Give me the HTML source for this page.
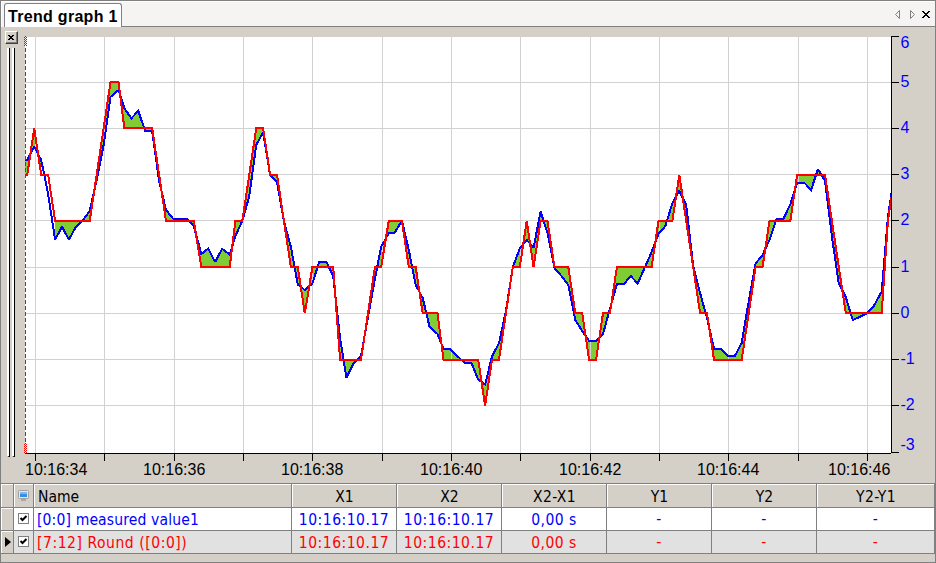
<!DOCTYPE html>
<html lang="en">
<head>
<meta charset="utf-8">
<title>Trend graph 1</title>
<style>
html,body{margin:0;padding:0;}
body{width:936px;height:563px;overflow:hidden;background:#d4d0c8;position:relative;font-family:"Liberation Sans",sans-serif;font-size:16px;color:#000;}
div,span,i{position:absolute;box-sizing:border-box;}
.edge{background:#808080;}
.tabbar{left:1px;top:1px;width:934px;height:26px;background:#f5f4f2;}
.tabline{left:122px;top:26px;width:813px;height:1px;background:#808080;}
.tab{left:4px;top:3px;width:118px;height:24px;background:#fff;border:1px solid #808080;border-bottom:none;border-radius:3px 3px 0 0;}
.tabtxt{left:8px;top:8px;line-height:18px;white-space:nowrap;font-weight:bold;letter-spacing:0.3px;}
.nav{left:890px;top:6px;}
.xbtn{left:5px;top:31px;width:13px;height:13px;border:1px solid;border-color:#fff #404040 #404040 #fff;box-shadow:inset -1px -1px 0 #808080;}
.grip{top:48px;height:409px;width:3px;border-left:2px solid #fff;border-right:1px solid #000;border-bottom:1px solid #000;}
.plot{position:absolute;left:0;top:0;}
.yl{left:900.5px;color:#0000ff;line-height:18px;height:18px;white-space:nowrap;}
.tl{top:461px;line-height:18px;height:18px;white-space:nowrap;}
.tbl{left:0;top:483px;width:936px;height:80px;font-family:"DejaVu Sans Condensed","Liberation Sans",sans-serif;font-size:15.5px;}
.tbl .top{left:1px;top:0;width:934px;height:1px;background:#808080;}
.hc{top:1px;height:23px;background:#d4d0c8;border-top:1px solid #fff;border-left:1px solid #fff;text-align:center;line-height:21px;padding-top:2px;white-space:nowrap;}
.hc.hl{text-align:left;padding-left:3px;}
.hline{left:1px;width:934px;height:1px;background:#808080;}
.rh{left:1px;width:12px;height:22px;background:#d4d0c8;border-top:1px solid #fff;border-left:1px solid #fff;}
.rh svg{position:absolute;left:3px;top:5px;}
.dc{height:22px;text-align:center;line-height:22px;padding-top:1px;white-space:nowrap;letter-spacing:0.5px;}
.dc.l{text-align:left;padding-left:3px;}
.r1{background:#fff;color:#0000ff;}
.r1.l{letter-spacing:0.15px;}
.r2.l{letter-spacing:0.55px;}
.r2{background:#e1e1e1;color:#ff0000;}
.vs{top:1px;width:1px;height:70px;background:#808080;}
.cb{left:4px;top:5px;width:11px;height:11px;background:#fff;border:1px solid #808080;}
.cb svg{position:absolute;left:0;top:0;}
.mon{left:18px;top:7px;}
.da{position:relative;top:-1px;}
.hc.ws{letter-spacing:0.4px;}
</style>
</head>
<body>
<div class="edge" style="left:0;top:0;width:936px;height:1px"></div>
<div class="edge" style="left:0;top:0;width:1px;height:563px"></div>
<div class="edge" style="left:935px;top:0;width:1px;height:563px"></div>
<div class="edge" style="left:0;top:562px;width:936px;height:1px"></div>
<div class="tabbar"></div>
<div style="left:1px;top:1px;width:934px;height:1px;background:#fff"></div>
<div style="left:1px;top:1px;width:1px;height:26px;background:#fff"></div>
<div class="tabline"></div>
<div class="tab"></div>
<span class="tabtxt">Trend graph 1</span>
<svg class="nav" style="position:absolute" width="44" height="16" viewBox="0 0 44 16">
<path d="M9.5 4.5 L9.5 12.5 L5.5 8.5 Z" fill="none" stroke="#808080" stroke-width="1"/>
<path d="M20.5 4.5 L20.5 12.5 L24.5 8.5 Z" fill="none" stroke="#808080" stroke-width="1"/>
<g fill="#000" shape-rendering="crispEdges"><rect x="32" y="5" width="2" height="1"/><rect x="38" y="5" width="2" height="1"/><rect x="33" y="6" width="2" height="1"/><rect x="37" y="6" width="2" height="1"/><rect x="34" y="7" width="4" height="1"/><rect x="35" y="8" width="2" height="1"/><rect x="34" y="9" width="4" height="1"/><rect x="33" y="10" width="2" height="1"/><rect x="37" y="10" width="2" height="1"/><rect x="32" y="11" width="2" height="1"/><rect x="38" y="11" width="2" height="1"/></g>
</svg>
<div class="xbtn"><svg style="position:absolute;left:2px;top:3px" width="6" height="5" viewBox="0 0 6 5" shape-rendering="crispEdges"><g fill="#000"><rect x="0" y="0" width="2" height="1"/><rect x="4" y="0" width="2" height="1"/><rect x="1" y="1" width="4" height="1"/><rect x="2" y="2" width="2" height="1"/><rect x="1" y="3" width="4" height="1"/><rect x="0" y="4" width="2" height="1"/><rect x="4" y="4" width="2" height="1"/></g></svg></div>
<div class="grip" style="left:7px"></div>
<div class="grip" style="left:12px"></div>
<svg class="plot" width="936" height="563" viewBox="0 0 936 563" shape-rendering="crispEdges">
<defs><clipPath id="cp"><rect x="25" y="37" width="866" height="416"/></clipPath></defs>
<rect x="25" y="37" width="866" height="416" fill="#fff"/>
<g clip-path="url(#cp)" fill="#80cc33" stroke="none"><polygon points="20.4,160.0 27.3,160.0 34.2,146.7 41.2,160.0 41.2,174.7 34.2,128.4 27.3,174.7 20.4,174.7"/><polygon points="55.1,239.7 62.0,226.7 68.9,239.7 75.9,226.7 82.8,220.5 89.7,211.0 96.7,180.0 103.6,145.0 110.5,97.0 118.5,90.0 124.4,108.3 131.4,118.3 138.3,110.8 145.2,131.3 152.2,131.3 159.1,181.0 166.0,210.0 173.0,218.5 179.9,219.0 186.8,219.0 193.8,226.0 201.3,254.0 208.2,248.7 215.2,262.0 222.1,248.7 229.7,254.7 235.4,236.0 242.3,221.0 249.3,196.0 256.2,145.0 263.1,132.5 270.1,175.0 277.0,182.0 283.9,221.0 290.9,247.0 297.8,284.5 304.8,290.0 312.4,283.5 319.3,261.7 326.3,261.7 333.2,276.0 340.1,338.0 346.4,377.5 353.3,364.0 361.0,356.0 368.0,317.0 374.9,279.0 381.1,247.0 388.8,233.0 394.9,232.5 401.9,220.5 408.8,250.0 415.7,285.0 422.7,298.0 429.6,327.0 437.5,334.0 443.5,349.0 450.4,349.0 457.3,356.0 464.3,362.5 471.2,362.5 478.2,379.5 485.1,384.5 492.0,356.5 499.0,343.0 505.9,311.0 512.8,267.0 519.8,248.5 526.7,240.0 533.6,247.5 540.6,211.7 547.5,233.0 554.5,268.0 561.4,276.0 568.3,285.0 575.3,320.0 582.2,331.0 589.1,341.0 596.1,341.0 603.0,334.0 609.9,309.0 616.9,284.2 623.8,284.2 630.7,276.0 637.7,283.5 644.6,268.0 651.6,252.0 658.5,234.0 665.4,226.0 672.4,203.0 679.3,190.8 686.2,205.0 693.2,266.0 700.1,293.0 707.0,318.0 714.0,348.7 720.9,348.7 727.9,356.0 734.8,356.0 741.7,343.0 748.7,301.5 755.6,263.5 762.5,255.0 769.5,240.0 776.4,219.0 783.3,219.0 790.3,204.5 797.2,182.5 804.1,182.5 811.1,190.0 818.0,169.0 825.0,181.0 831.9,236.5 838.8,283.5 845.8,297.0 852.7,320.0 859.6,317.0 866.6,313.5 873.5,306.5 881.7,291.5 887.9,217.0 894.8,172.0 894.8,174.7 887.9,220.9 881.7,313.3 873.5,313.3 866.6,313.3 859.6,313.3 852.7,313.3 845.8,313.3 838.8,267.1 831.9,220.9 825.0,174.7 818.0,174.7 811.1,174.7 804.1,174.7 797.2,174.7 790.3,220.9 783.3,220.9 776.4,220.9 769.5,220.9 762.5,267.1 755.6,267.1 748.7,313.3 741.7,359.6 734.8,359.6 727.9,359.6 720.9,359.6 714.0,359.6 707.0,313.3 700.1,313.3 693.2,267.1 686.2,220.9 679.3,174.7 672.4,220.9 665.4,220.9 658.5,220.9 651.6,267.1 644.6,267.1 637.7,267.1 630.7,267.1 623.8,267.1 616.9,267.1 609.9,313.3 603.0,313.3 596.1,359.6 589.1,359.6 582.2,313.3 575.3,313.3 568.3,267.1 561.4,267.1 554.5,267.1 547.5,220.9 540.6,220.9 533.6,267.1 526.7,220.9 519.8,267.1 512.8,267.1 505.9,313.3 499.0,359.6 492.0,359.6 485.1,405.8 478.2,359.6 471.2,359.6 464.3,359.6 457.3,359.6 450.4,359.6 443.5,359.6 437.5,313.3 429.6,313.3 422.7,313.3 415.7,267.1 408.8,267.1 401.9,220.9 394.9,220.9 388.8,220.9 381.1,267.1 374.9,267.1 368.0,313.3 361.0,359.6 353.3,359.6 346.4,359.6 340.1,359.6 333.2,267.1 326.3,267.1 319.3,267.1 312.4,267.1 304.8,313.3 297.8,267.1 290.9,267.1 283.9,220.9 277.0,174.7 270.1,174.7 263.1,128.4 256.2,128.4 249.3,174.7 242.3,220.9 235.4,220.9 229.7,267.1 222.1,267.1 215.2,267.1 208.2,267.1 201.3,267.1 193.8,220.9 186.8,220.9 179.9,220.9 173.0,220.9 166.0,220.9 159.1,174.7 152.2,128.4 145.2,128.4 138.3,128.4 131.4,128.4 124.4,128.4 118.5,82.2 110.5,82.2 103.6,128.4 96.7,174.7 89.7,220.9 82.8,220.9 75.9,220.9 68.9,220.9 62.0,220.9 55.1,220.9"/></g>
<g fill="#d2d2d2"><rect x="35" y="37" width="1" height="416"/><rect x="104" y="37" width="1" height="416"/><rect x="174" y="37" width="1" height="416"/><rect x="243" y="37" width="1" height="416"/><rect x="312" y="37" width="1" height="416"/><rect x="382" y="37" width="1" height="416"/><rect x="451" y="37" width="1" height="416"/><rect x="520" y="37" width="1" height="416"/><rect x="590" y="37" width="1" height="416"/><rect x="659" y="37" width="1" height="416"/><rect x="728" y="37" width="1" height="416"/><rect x="798" y="37" width="1" height="416"/><rect x="867" y="37" width="1" height="416"/><rect x="25" y="82" width="866" height="1"/><rect x="25" y="128" width="866" height="1"/><rect x="25" y="174" width="866" height="1"/><rect x="25" y="220" width="866" height="1"/><rect x="25" y="267" width="866" height="1"/><rect x="25" y="313" width="866" height="1"/><rect x="25" y="359" width="866" height="1"/><rect x="25" y="405" width="866" height="1"/></g>
<g clip-path="url(#cp)">
<polyline points="20.4,160.0 27.3,160.0 34.2,146.7 41.2,160.0 48.1,194.0 55.1,239.7 62.0,226.7 68.9,239.7 75.9,226.7 82.8,220.5 89.7,211.0 96.7,180.0 103.6,145.0 110.5,97.0 118.5,90.0 124.4,108.3 131.4,118.3 138.3,110.8 145.2,131.3 152.2,131.3 159.1,181.0 166.0,210.0 173.0,218.5 179.9,219.0 186.8,219.0 193.8,226.0 201.3,254.0 208.2,248.7 215.2,262.0 222.1,248.7 229.7,254.7 235.4,236.0 242.3,221.0 249.3,196.0 256.2,145.0 263.1,132.5 270.1,175.0 277.0,182.0 283.9,221.0 290.9,247.0 297.8,284.5 304.8,290.0 312.4,283.5 319.3,261.7 326.3,261.7 333.2,276.0 340.1,338.0 346.4,377.5 353.3,364.0 361.0,356.0 368.0,317.0 374.9,279.0 381.1,247.0 388.8,233.0 394.9,232.5 401.9,220.5 408.8,250.0 415.7,285.0 422.7,298.0 429.6,327.0 437.5,334.0 443.5,349.0 450.4,349.0 457.3,356.0 464.3,362.5 471.2,362.5 478.2,379.5 485.1,384.5 492.0,356.5 499.0,343.0 505.9,311.0 512.8,267.0 519.8,248.5 526.7,240.0 533.6,247.5 540.6,211.7 547.5,233.0 554.5,268.0 561.4,276.0 568.3,285.0 575.3,320.0 582.2,331.0 589.1,341.0 596.1,341.0 603.0,334.0 609.9,309.0 616.9,284.2 623.8,284.2 630.7,276.0 637.7,283.5 644.6,268.0 651.6,252.0 658.5,234.0 665.4,226.0 672.4,203.0 679.3,190.8 686.2,205.0 693.2,266.0 700.1,293.0 707.0,318.0 714.0,348.7 720.9,348.7 727.9,356.0 734.8,356.0 741.7,343.0 748.7,301.5 755.6,263.5 762.5,255.0 769.5,240.0 776.4,219.0 783.3,219.0 790.3,204.5 797.2,182.5 804.1,182.5 811.1,190.0 818.0,169.0 825.0,181.0 831.9,236.5 838.8,283.5 845.8,297.0 852.7,320.0 859.6,317.0 866.6,313.5 873.5,306.5 881.7,291.5 887.9,217.0 894.8,172.0" fill="none" stroke="#0000ff" stroke-width="2" stroke-linejoin="miter" stroke-miterlimit="2"/>
<polyline points="20.4,174.7 27.3,174.7 34.2,128.4 41.2,174.7 48.1,174.7 55.1,220.9 62.0,220.9 68.9,220.9 75.9,220.9 82.8,220.9 89.7,220.9 96.7,174.7 103.6,128.4 110.5,82.2 118.5,82.2 124.4,128.4 131.4,128.4 138.3,128.4 145.2,128.4 152.2,128.4 159.1,174.7 166.0,220.9 173.0,220.9 179.9,220.9 186.8,220.9 193.8,220.9 201.3,267.1 208.2,267.1 215.2,267.1 222.1,267.1 229.7,267.1 235.4,220.9 242.3,220.9 249.3,174.7 256.2,128.4 263.1,128.4 270.1,174.7 277.0,174.7 283.9,220.9 290.9,267.1 297.8,267.1 304.8,313.3 312.4,267.1 319.3,267.1 326.3,267.1 333.2,267.1 340.1,359.6 346.4,359.6 353.3,359.6 361.0,359.6 368.0,313.3 374.9,267.1 381.1,267.1 388.8,220.9 394.9,220.9 401.9,220.9 408.8,267.1 415.7,267.1 422.7,313.3 429.6,313.3 437.5,313.3 443.5,359.6 450.4,359.6 457.3,359.6 464.3,359.6 471.2,359.6 478.2,359.6 485.1,405.8 492.0,359.6 499.0,359.6 505.9,313.3 512.8,267.1 519.8,267.1 526.7,220.9 533.6,267.1 540.6,220.9 547.5,220.9 554.5,267.1 561.4,267.1 568.3,267.1 575.3,313.3 582.2,313.3 589.1,359.6 596.1,359.6 603.0,313.3 609.9,313.3 616.9,267.1 623.8,267.1 630.7,267.1 637.7,267.1 644.6,267.1 651.6,267.1 658.5,220.9 665.4,220.9 672.4,220.9 679.3,174.7 686.2,220.9 693.2,267.1 700.1,313.3 707.0,313.3 714.0,359.6 720.9,359.6 727.9,359.6 734.8,359.6 741.7,359.6 748.7,313.3 755.6,267.1 762.5,267.1 769.5,220.9 776.4,220.9 783.3,220.9 790.3,220.9 797.2,174.7 804.1,174.7 811.1,174.7 818.0,174.7 825.0,174.7 831.9,220.9 838.8,267.1 845.8,313.3 852.7,313.3 859.6,313.3 866.6,313.3 873.5,313.3 881.7,313.3 887.9,220.9 894.8,174.7" fill="none" stroke="#ff0000" stroke-width="2" stroke-linejoin="miter" stroke-miterlimit="2"/>
</g>
<g fill="#000"><rect x="25" y="453" width="866" height="1"/><rect x="891" y="36" width="1" height="417"/><rect x="891" y="36" width="8" height="1"/><rect x="891" y="82" width="8" height="1"/><rect x="891" y="128" width="8" height="1"/><rect x="891" y="174" width="8" height="1"/><rect x="891" y="220" width="8" height="1"/><rect x="891" y="267" width="8" height="1"/><rect x="891" y="313" width="8" height="1"/><rect x="891" y="359" width="8" height="1"/><rect x="891" y="405" width="8" height="1"/><rect x="891" y="452" width="8" height="1"/><rect x="35" y="453" width="1" height="8"/><rect x="104" y="453" width="1" height="8"/><rect x="174" y="453" width="1" height="8"/><rect x="243" y="453" width="1" height="8"/><rect x="312" y="453" width="1" height="8"/><rect x="382" y="453" width="1" height="8"/><rect x="451" y="453" width="1" height="8"/><rect x="520" y="453" width="1" height="8"/><rect x="590" y="453" width="1" height="8"/><rect x="659" y="453" width="1" height="8"/><rect x="728" y="453" width="1" height="8"/><rect x="798" y="453" width="1" height="8"/><rect x="867" y="453" width="1" height="8"/></g>
<g fill="#ff0000"><rect x="25" y="36" width="1" height="1"/><rect x="24" y="37" width="1" height="1"/><rect x="26" y="37" width="1" height="1"/><rect x="25" y="38" width="1" height="1"/><rect x="24" y="39" width="1" height="1"/><rect x="26" y="39" width="1" height="1"/><rect x="25" y="40" width="1" height="1"/><rect x="24" y="41" width="1" height="1"/><rect x="26" y="41" width="1" height="1"/><rect x="25" y="42" width="1" height="1"/><rect x="24" y="43" width="1" height="1"/><rect x="26" y="43" width="1" height="1"/><rect x="25" y="44" width="1" height="1"/><rect x="24" y="45" width="1" height="1"/><rect x="26" y="45" width="1" height="1"/><rect x="25" y="443" width="1" height="1"/><rect x="24" y="444" width="1" height="1"/><rect x="26" y="444" width="1" height="1"/><rect x="25" y="445" width="1" height="1"/><rect x="24" y="446" width="1" height="1"/><rect x="26" y="446" width="1" height="1"/><rect x="25" y="447" width="1" height="1"/><rect x="24" y="448" width="1" height="1"/><rect x="26" y="448" width="1" height="1"/><rect x="25" y="449" width="1" height="1"/><rect x="24" y="450" width="1" height="1"/><rect x="26" y="450" width="1" height="1"/><rect x="25" y="451" width="1" height="1"/><rect x="24" y="452" width="1" height="1"/><rect x="26" y="452" width="1" height="1"/><rect x="25" y="48" width="1" height="4"/><rect x="25" y="54" width="1" height="4"/><rect x="25" y="60" width="1" height="4"/><rect x="25" y="66" width="1" height="4"/><rect x="25" y="72" width="1" height="4"/><rect x="25" y="78" width="1" height="4"/><rect x="25" y="84" width="1" height="4"/><rect x="25" y="90" width="1" height="4"/><rect x="25" y="96" width="1" height="4"/><rect x="25" y="102" width="1" height="4"/><rect x="25" y="108" width="1" height="4"/><rect x="25" y="114" width="1" height="4"/><rect x="25" y="120" width="1" height="4"/><rect x="25" y="126" width="1" height="4"/><rect x="25" y="132" width="1" height="4"/><rect x="25" y="138" width="1" height="4"/><rect x="25" y="144" width="1" height="4"/><rect x="25" y="150" width="1" height="4"/><rect x="25" y="156" width="1" height="4"/><rect x="25" y="162" width="1" height="4"/><rect x="25" y="168" width="1" height="4"/><rect x="25" y="174" width="1" height="4"/><rect x="25" y="180" width="1" height="4"/><rect x="25" y="186" width="1" height="4"/><rect x="25" y="192" width="1" height="4"/><rect x="25" y="198" width="1" height="4"/><rect x="25" y="204" width="1" height="4"/><rect x="25" y="210" width="1" height="4"/><rect x="25" y="216" width="1" height="4"/><rect x="25" y="222" width="1" height="4"/><rect x="25" y="228" width="1" height="4"/><rect x="25" y="234" width="1" height="4"/><rect x="25" y="240" width="1" height="4"/><rect x="25" y="246" width="1" height="4"/><rect x="25" y="252" width="1" height="4"/><rect x="25" y="258" width="1" height="4"/><rect x="25" y="264" width="1" height="4"/><rect x="25" y="270" width="1" height="4"/><rect x="25" y="276" width="1" height="4"/><rect x="25" y="282" width="1" height="4"/><rect x="25" y="288" width="1" height="4"/><rect x="25" y="294" width="1" height="4"/><rect x="25" y="300" width="1" height="4"/><rect x="25" y="306" width="1" height="4"/><rect x="25" y="312" width="1" height="4"/><rect x="25" y="318" width="1" height="4"/><rect x="25" y="324" width="1" height="4"/><rect x="25" y="330" width="1" height="4"/><rect x="25" y="336" width="1" height="4"/><rect x="25" y="342" width="1" height="4"/><rect x="25" y="348" width="1" height="4"/><rect x="25" y="354" width="1" height="4"/><rect x="25" y="360" width="1" height="4"/><rect x="25" y="366" width="1" height="4"/><rect x="25" y="372" width="1" height="4"/><rect x="25" y="378" width="1" height="4"/><rect x="25" y="384" width="1" height="4"/><rect x="25" y="390" width="1" height="4"/><rect x="25" y="396" width="1" height="4"/><rect x="25" y="402" width="1" height="4"/><rect x="25" y="408" width="1" height="4"/><rect x="25" y="414" width="1" height="4"/><rect x="25" y="420" width="1" height="4"/><rect x="25" y="426" width="1" height="4"/><rect x="25" y="432" width="1" height="4"/><rect x="25" y="438" width="1" height="4"/></g>
</svg>
<span class="yl" style="top:34px">6</span>
<span class="yl" style="top:73px">5</span>
<span class="yl" style="top:119px">4</span>
<span class="yl" style="top:165px">3</span>
<span class="yl" style="top:211px">2</span>
<span class="yl" style="top:258px">1</span>
<span class="yl" style="top:304px">0</span>
<span class="yl" style="top:350px">-1</span>
<span class="yl" style="top:396px">-2</span>
<span class="yl" style="top:436px">-3</span>
<span class="tl" style="left:25px">10:16:34</span>
<span class="tl" style="left:143px">10:16:36</span>
<span class="tl" style="left:281px">10:16:38</span>
<span class="tl" style="left:420px">10:16:40</span>
<span class="tl" style="left:559px">10:16:42</span>
<span class="tl" style="left:697px">10:16:44</span>
<span class="tl" style="left:828px">10:16:46</span>
<div class="tbl">
<div class="top"></div>
<div class="hc" style="left:1px;width:12px"></div>
<div class="hc" style="left:14px;width:19px"></div>
<div class="hc hl" style="left:34px;width:257px">Name</div>
<div class="hc" style="left:292px;width:104px">X1</div>
<div class="hc" style="left:397px;width:104px">X2</div>
<div class="hc ws" style="left:502px;width:104px">X2-X1</div>
<div class="hc" style="left:607px;width:104px">Y1</div>
<div class="hc" style="left:712px;width:104px">Y2</div>
<div class="hc ws" style="left:817px;width:117px">Y2-Y1</div>
<div class="rh" style="top:25px"></div>
<div class="dc r1" style="top:25px;left:14px;width:19px"><i class="cb"><svg width="9" height="9" viewBox="0 0 9 9"><path d="M1.5 4 L3.5 6 L7.5 2" fill="none" stroke="#000" stroke-width="2"/></svg></i></div>
<div class="dc r1 l" style="top:25px;left:34px;width:257px">[0:0] measured value1</div>
<div class="dc r1" style="top:25px;left:292px;width:104px">10:16:10.17</div>
<div class="dc r1" style="top:25px;left:397px;width:104px">10:16:10.17</div>
<div class="dc r1" style="top:25px;left:502px;width:104px">0,00 s</div>
<div class="dc r1" style="top:25px;left:607px;width:104px"><span class="da">-</span></div>
<div class="dc r1" style="top:25px;left:712px;width:104px"><span class="da">-</span></div>
<div class="dc r1" style="top:25px;left:817px;width:117px"><span class="da">-</span></div>
<div class="rh" style="top:48px"><svg width="6" height="10" viewBox="0 0 6 10"><path d="M0 0 L6 5 L0 10 Z" fill="#000"/></svg></div>
<div class="dc r2" style="top:48px;left:14px;width:19px"><i class="cb"><svg width="9" height="9" viewBox="0 0 9 9"><path d="M1.5 4 L3.5 6 L7.5 2" fill="none" stroke="#000" stroke-width="2"/></svg></i></div>
<div class="dc r2 l" style="top:48px;left:34px;width:257px">[7:12] Round ([0:0])</div>
<div class="dc r2" style="top:48px;left:292px;width:104px">10:16:10.17</div>
<div class="dc r2" style="top:48px;left:397px;width:104px">10:16:10.17</div>
<div class="dc r2" style="top:48px;left:502px;width:104px">0,00 s</div>
<div class="dc r2" style="top:48px;left:607px;width:104px"><span class="da">-</span></div>
<div class="dc r2" style="top:48px;left:712px;width:104px"><span class="da">-</span></div>
<div class="dc r2" style="top:48px;left:817px;width:117px"><span class="da">-</span></div>
<div class="vs" style="left:13px"></div>
<div class="vs" style="left:33px"></div>
<div class="vs" style="left:291px"></div>
<div class="vs" style="left:396px"></div>
<div class="vs" style="left:501px"></div>
<div class="vs" style="left:606px"></div>
<div class="vs" style="left:711px"></div>
<div class="vs" style="left:816px"></div>
<div class="vs" style="left:934px"></div>
<div class="hline" style="top:24px"></div>
<div class="hline" style="top:47px"></div>
<div class="hline" style="top:70px"></div>
<svg class="mon" style="position:absolute" width="11" height="11" viewBox="0 0 11 11">
<rect x="0.5" y="0.5" width="10" height="8" rx="1" fill="#e8e8e8" stroke="#a0a0a0"/>
<rect x="2" y="2" width="7" height="5" fill="#3a8de0"/>
<rect x="2" y="2" width="7" height="2" fill="#7db8ee"/>
<rect x="3" y="9" width="5" height="2" fill="#a8a8a8"/>
</svg>
</div>
</body>
</html>
